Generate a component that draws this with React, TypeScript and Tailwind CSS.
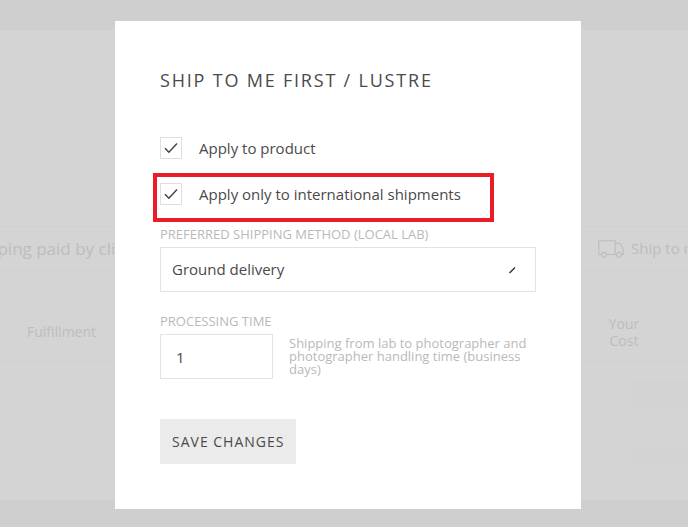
import React, { useState } from 'react';

function TruckIcon() {
  return (
    <svg className="w-[26px] h-[18px] shrink-0" viewBox="0 0 26 18" fill="none" stroke="#bcbcbc" strokeWidth="1.1">
      <path d="M3.500 14.500H.8V.8h16.400v13.700H9" />
      <path d="M17.200 3.200h3.600c2.600 1.400 4.200 4.200 4.400 7.400v3.900h-1.700M17.200 14.500h1.200" />
      <circle cx="6.200" cy="14.800" r="2.400" />
      <circle cx="21" cy="14.800" r="2.400" />
    </svg>
  );
}

interface CheckRowProps {
  label: string;
  highlighted?: boolean;
}

function CheckRow({ label, highlighted }: CheckRowProps) {
  const [checked, setChecked] = useState(true);

  return (
    <div className="relative flex">
      <label className="flex items-center gap-[17px] text-[15px] leading-[22px] cursor-pointer">
        <span className="grid w-[22px] h-[22px]">
          <input
            type="checkbox"
            checked={checked}
            onChange={(e) => setChecked(e.target.checked)}
            className="col-start-1 row-start-1 appearance-none w-full h-full border border-[#dfdfdf] bg-white"
          />
          {checked && (
            <svg
              className="col-start-1 row-start-1 w-full h-full pointer-events-none"
              viewBox="0 0 22 22"
              fill="none"
              stroke="#444"
              strokeWidth="1.5"
            >
              <path d="M5 11.200l3.900 4L17 6.600" />
            </svg>
          )}
        </span>
        {label}
      </label>
      {highlighted && (
        <div className="absolute -left-[7px] -top-[10px] -bottom-[17px] w-[341px] border-4 border-[#ea1c26] pointer-events-none" />
      )}
    </div>
  );
}

function BackgroundPage() {
  return (
    <div className="min-h-screen flex flex-col bg-[#d4d4d4] text-[#bdbdbd]" aria-hidden="true">
      <div className="h-[30px] bg-[#cfcfcf]" />
      <div className="h-[196px]" />
      <div className="h-[45px] flex items-center justify-between border-y border-[#d0d0d0] overflow-hidden whitespace-nowrap text-[15px]">
        <span className="-ml-[37px] text-[17px]">Shipping paid by client</span>
        <div className="flex items-center gap-[7px] w-[90px]">
          <TruckIcon />
          <span>Ship to me first</span>
        </div>
      </div>
      <div className="h-[91px] flex items-center justify-between pt-[31px] pl-[27px] pr-[48px] border-b border-[#d0d0d0] text-sm leading-[17px]">
        <span>Fulfillment</span>
        <span className="w-8 text-center">Your Cost</span>
      </div>
      <div className="flex-1 flex flex-col items-end gap-[41px] pt-[19px]">
        <div className="w-[55px] h-[26px] bg-[#d2d2d2]" />
        <div className="w-[55px] h-[16px] bg-[#d2d2d2]" />
      </div>
      <div className="h-[27px] bg-[#cfcfcf]" />
    </div>
  );
}

export default function App() {
  const [method, setMethod] = useState('ground');
  const [days, setDays] = useState('1');

  return (
    <div className="relative font-['Open_Sans','Noto_Sans',sans-serif]">
      <BackgroundPage />

      <div className="absolute inset-0 flex items-start justify-center pt-[21px] pl-2">
        <form
          role="dialog"
          aria-labelledby="dialog-title"
          onSubmit={(e) => e.preventDefault()}
          className="w-full max-w-[466px] bg-white p-[45px] text-[#4a4a4a]"
        >
          <h1 id="dialog-title" className="text-lg leading-7 tracking-widest uppercase">
            Ship to me first / Lustre
          </h1>

          <div className="flex flex-col gap-6 mt-[43px]">
            <CheckRow label="Apply to product" />
            <CheckRow label="Apply only to international shipments" highlighted />
          </div>

          <div className="flex flex-col mt-[19px]">
            <label htmlFor="method" className="text-[13px] leading-5 mb-[3px] text-[#b9b9b9] uppercase">
              Preferred shipping method (local lab)
            </label>
            <div className="grid items-center">
              <select
                id="method"
                value={method}
                onChange={(e) => setMethod(e.target.value)}
                className="col-start-1 row-start-1 appearance-none w-full h-[45px] px-[11px] border border-[#e3e3e3] bg-white text-[15px]"
              >
                <option value="ground">Ground delivery</option>
                <option value="express">Express delivery</option>
              </select>
              <svg
                className="col-start-1 row-start-1 justify-self-end w-2 h-2 mr-5 pointer-events-none"
                viewBox="0 0 8 8"
                stroke="#333"
                strokeWidth="1.5"
              >
                <path d="M1.500 7l5.500-5.500" />
              </svg>
            </div>
          </div>

          <div className="flex flex-col mt-[19px]">
            <label htmlFor="processing" className="text-[13px] leading-5 mb-[3px] text-[#b9b9b9] uppercase">
              Processing time
            </label>
            <div className="flex gap-4">
              <input
                id="processing"
                type="text"
                value={days}
                onChange={(e) => setDays(e.target.value)}
                className="w-[113px] h-[45px] shrink-0 px-[15px] border border-[#e3e3e3] bg-white text-[15px]"
              />
              <p className="pt-[3px] text-[13px] leading-[13px] text-[#b9b9b9]">
                Shipping from lab to photographer and photographer handling time (business days)
              </p>
            </div>
          </div>

          <button
            type="submit"
            className="block mt-10 h-[45px] px-3 bg-[#ebebeb] text-sm tracking-[1px] uppercase"
          >
            Save changes
          </button>
        </form>
      </div>
    </div>
  );
}
